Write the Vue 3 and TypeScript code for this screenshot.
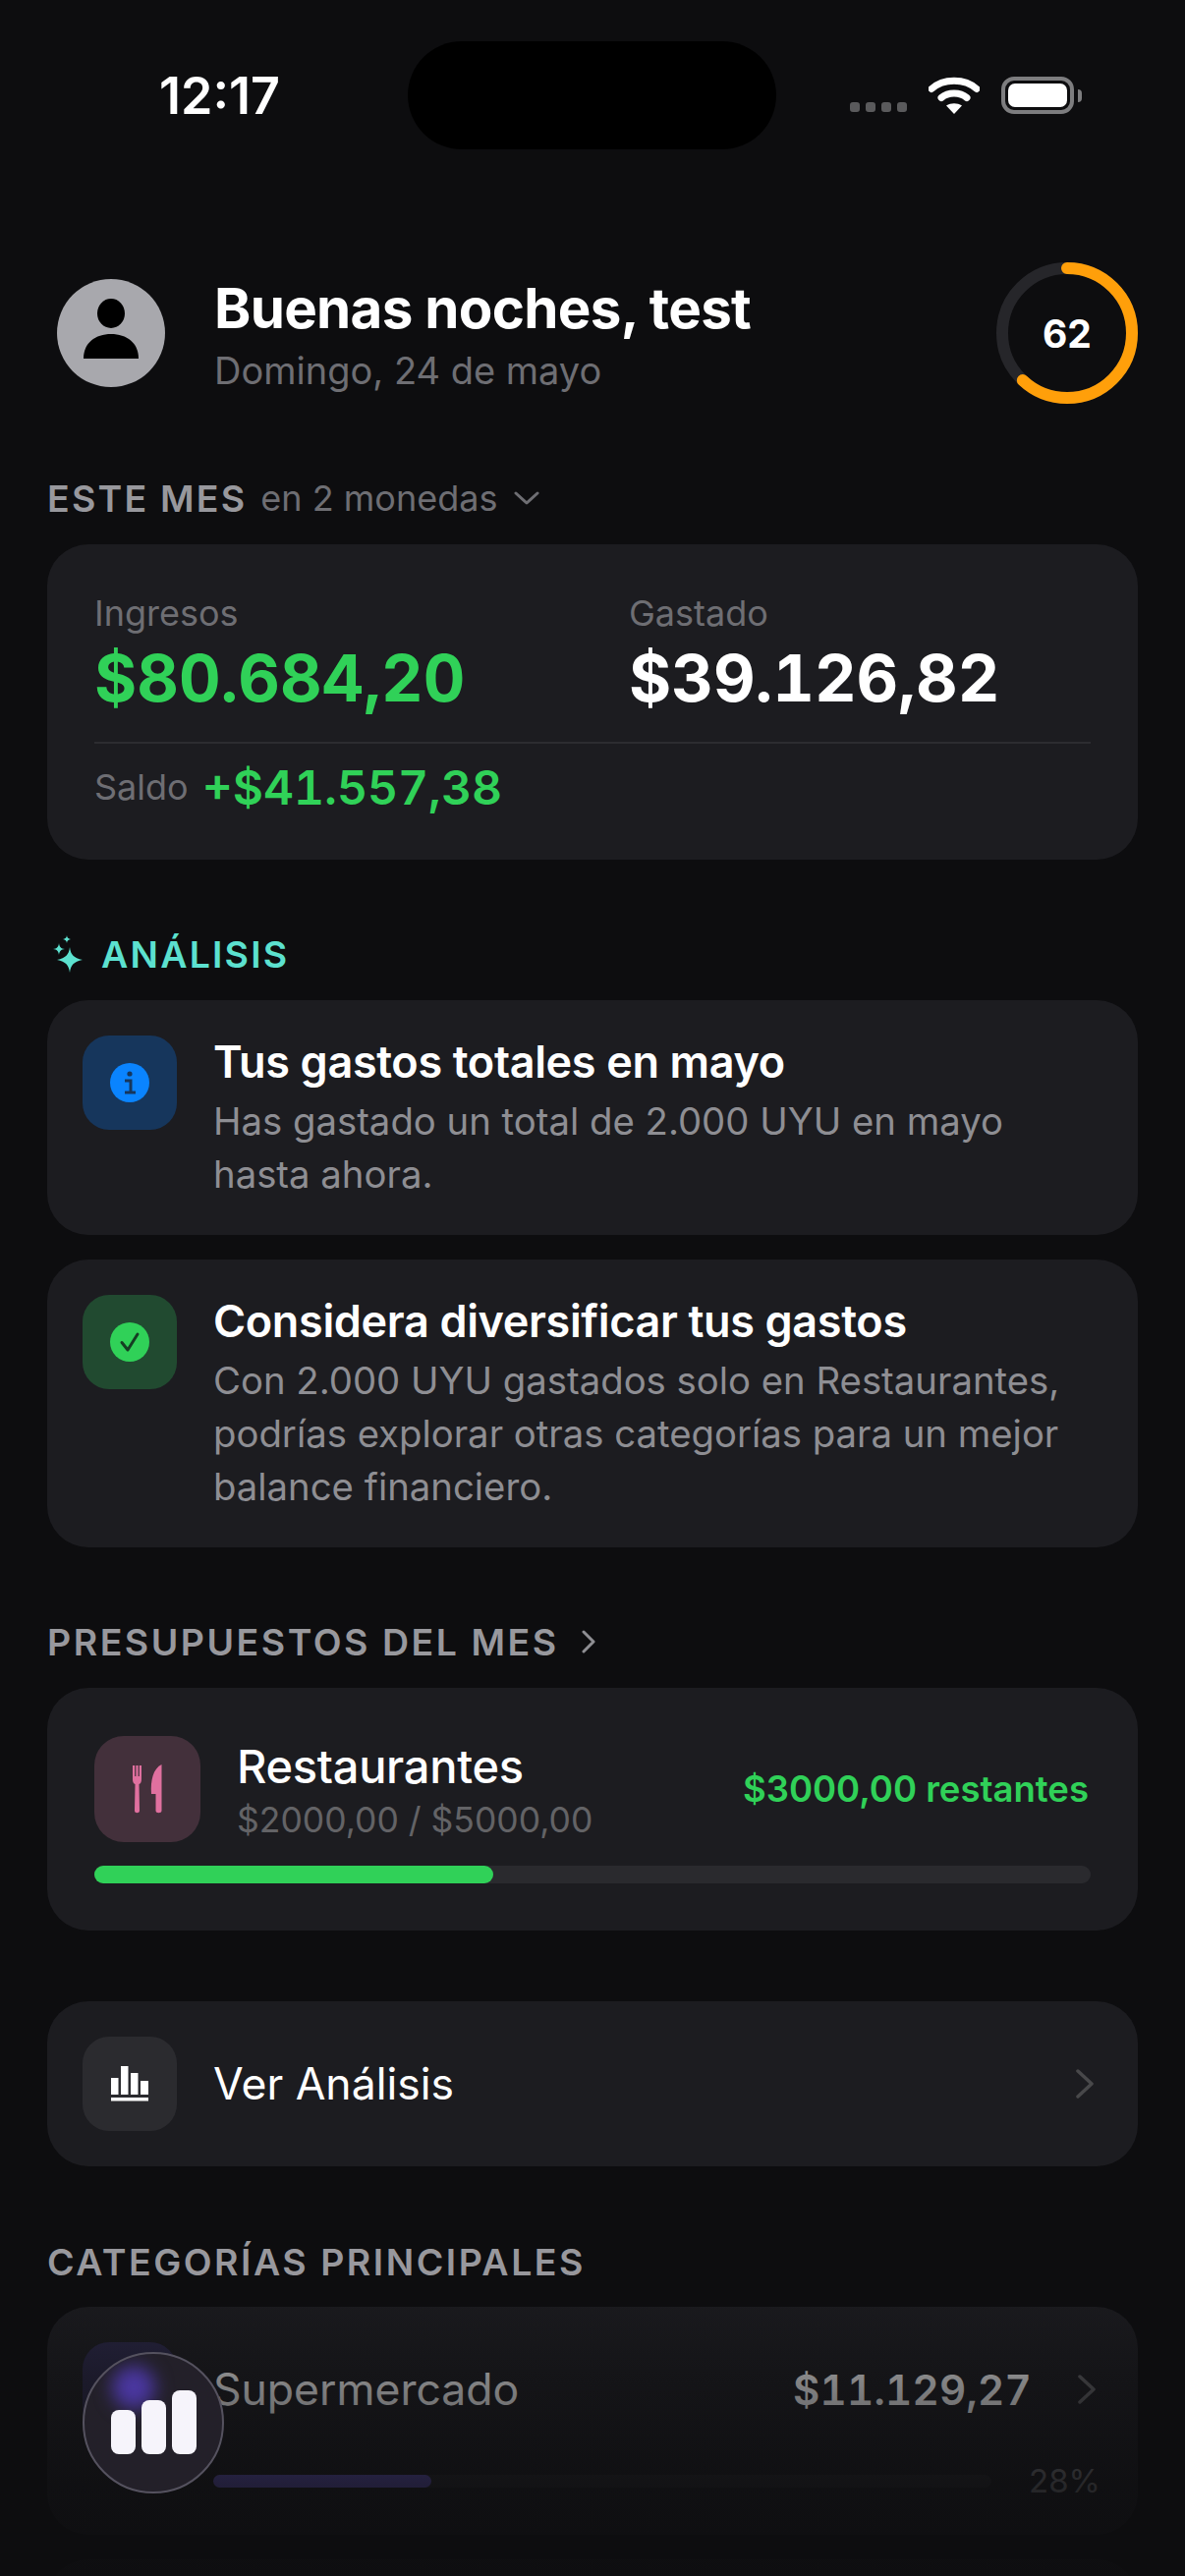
<script setup lang="ts">
interface Insight {
  kind: 'info' | 'ok'
  title: string
  body: string
}

const insights: Insight[] = [
  {
    kind: 'info',
    title: 'Tus gastos totales en mayo',
    body: 'Has gastado un total de 2.000 UYU en mayo hasta ahora.',
  },
  {
    kind: 'ok',
    title: 'Considera diversificar tus gastos',
    body: 'Con 2.000 UYU gastados solo en Restaurantes, podrías explorar otras categorías para un mejor balance financiero.',
  },
]

const score = 62
const budgetPct = 40
const categoryPct = 28
</script>

<template>
  <div class="screen">
    <header class="status">
      <span class="time">12:17</span>
      <div class="island"></div>
      <div class="status-icons">
        <div class="dots"><i></i><i></i><i></i><i></i></div>
        <svg class="wifi" width="52" height="38" viewBox="0 0 52 38">
          <path d="M3 12.5C15 1.5 37 1.5 49 12.5" fill="none" stroke="#fff" stroke-width="7" stroke-linecap="round" />
          <path d="M13 21.5C20 15.5 32 15.5 39 21.5" fill="none" stroke="#fff" stroke-width="7" stroke-linecap="round" />
          <path d="M26 38L18 29.5C23 26.5 29 26.5 34 29.5Z" fill="#fff" />
        </svg>
        <div class="battery"><div class="battery-fill"></div></div>
        <div class="battery-cap"></div>
      </div>
    </header>

    <main class="content">
      <section class="greeting">
        <div class="avatar">
          <svg width="60" height="64" viewBox="0 0 60 64">
            <ellipse cx="30" cy="15" rx="14" ry="15" fill="#000" />
            <path d="M2 61C2 45 14 36 30 36S58 45 58 61Z" fill="#000" />
          </svg>
        </div>
        <div class="greeting-text">
          <h1>Buenas noches, test</h1>
          <p>Domingo, 24 de mayo</p>
        </div>
        <div class="ring">
          <svg width="144" height="144" viewBox="0 0 144 144">
            <circle cx="72" cy="72" r="66" fill="none" stroke="#26262a" stroke-width="12" />
            <circle
              cx="72"
              cy="72"
              r="66"
              fill="none"
              stroke="#ff9f0a"
              stroke-width="12"
              stroke-linecap="round"
              pathLength="100"
              :stroke-dasharray="`${score} 100`"
              transform="rotate(-90 72 72)"
            />
          </svg>
          <span>{{ score }}</span>
        </div>
      </section>

      <div class="label month-label">
        <span>ESTE MES</span>
        <em>en 2 monedas</em>
        <svg width="26" height="16" viewBox="0 0 26 16">
          <path d="M2 3L13 13L24 3" fill="none" stroke="#6e6e73" stroke-width="3" stroke-linecap="round" stroke-linejoin="round" />
        </svg>
      </div>
      <section class="card summary">
        <div class="summary-cols">
          <div>
            <p class="muted">Ingresos</p>
            <p class="big green">$80.684,20</p>
          </div>
          <div>
            <p class="muted">Gastado</p>
            <p class="big">$39.126,82</p>
          </div>
        </div>
        <div class="balance">
          <span class="muted">Saldo</span>
          <strong>+$41.557,38</strong>
        </div>
      </section>

      <div class="label ai-label">
        <svg width="34" height="38" viewBox="0 0 34 38">
          <path d="M19 12C20 20 23 23 32 25C23 27 20 30 19 38C18 30 15 27 6 25C15 23 18 20 19 12Z" fill="#5ce1cf" />
          <path d="M8 8C8.5 12 10 13.500 14 14C10 14.500 8.500 16 8 20C7.500 16 6 14.500 2 14C6 13.500 7.500 12 8 8Z" fill="#5ce1cf" />
          <path d="M16 0C16.300 2.500 17.500 3.700 20 4C17.500 4.300 16.300 5.500 16 8C15.700 5.500 14.500 4.300 12 4C14.500 3.700 15.700 2.500 16 0Z" fill="#5ce1cf" />
        </svg>
        <span>ANÁLISIS</span>
      </div>
      <div class="insights">
        <article v-for="item in insights" :key="item.title" class="card insight">
          <div class="tile" :class="item.kind">
            <div class="badge">
              <svg v-if="item.kind === 'info'" width="40" height="40" viewBox="0 0 40 40">
                <circle cx="20" cy="11" r="2.600" fill="#16365c" />
                <path d="M15 18H21V29M15 30H26" fill="none" stroke="#16365c" stroke-width="3" />
              </svg>
              <svg v-else width="40" height="40" viewBox="0 0 40 40">
                <path d="M12 20.500L18 28L28 12" fill="none" stroke="#153d23" stroke-width="3" stroke-linecap="round" stroke-linejoin="round" />
              </svg>
            </div>
          </div>
          <div class="insight-text">
            <h3>{{ item.title }}</h3>
            <p>{{ item.body }}</p>
          </div>
        </article>
      </div>

      <div class="label budget-label">
        <span>PRESUPUESTOS DEL MES</span>
        <svg width="16" height="24" viewBox="0 0 16 24">
          <path d="M3 2L13 12L3 22" fill="none" stroke="#8e8e93" stroke-width="3" stroke-linecap="round" stroke-linejoin="round" />
        </svg>
      </div>
      <section class="card budget">
        <div class="budget-row">
          <div class="tile food">
            <svg width="30" height="50" viewBox="0 0 30 50">
              <path d="M0 1H2.200V12H3.400V1H5.600V12H6.800V1H9V15C9 18 8 19.500 6.500 20L7 47C7 50 2 50 2 47L2.500 20C1 19.500 0 18 0 15Z" fill="#e0709f" />
              <path d="M29.500 0V47C29.500 50 23.500 50 23.500 47V30H19C18 16 21 4 29.500 0Z" fill="#e0709f" />
            </svg>
          </div>
          <div class="budget-text">
            <h3>Restaurantes</h3>
            <p>$2000,00 / $5000,00</p>
          </div>
          <span class="remaining">$3000,00 restantes</span>
        </div>
        <div class="track">
          <div class="fill" :style="{ width: `${budgetPct}%` }"></div>
        </div>
      </section>

      <section class="card link">
        <div class="tile plain">
          <svg width="38" height="36" viewBox="0 0 38 36">
            <path d="M0 12H7.500V29H0ZM10 0H17.500V29H10ZM20 7H27.500V29H20ZM30 15H38V29H30Z" fill="#fff" />
            <rect y="32" width="38" height="3.500" fill="#fff" />
          </svg>
        </div>
        <span>Ver Análisis</span>
        <svg class="chev" width="20" height="30" viewBox="0 0 20 30">
          <path d="M3 2L17 15L3 28" fill="none" stroke="#48484a" stroke-width="3.500" stroke-linecap="round" stroke-linejoin="round" />
        </svg>
      </section>

      <div class="label cat-label"><span>CATEGORÍAS PRINCIPALES</span></div>
      <section class="card category">
        <div class="tile cat"></div>
        <div class="category-body">
          <div class="category-top">
            <span class="cat-name">Supermercado</span>
            <span class="cat-amount">$11.129,27</span>
            <svg width="20" height="30" viewBox="0 0 20 30">
              <path d="M3 2L17 15L3 28" fill="none" stroke="#636366" stroke-width="3.500" stroke-linecap="round" stroke-linejoin="round" />
            </svg>
          </div>
          <div class="category-bottom">
            <div class="cat-track">
              <div class="cat-fill" :style="{ width: `${categoryPct}%` }"></div>
            </div>
            <span class="cat-pct">{{ categoryPct }}%</span>
          </div>
        </div>
      </section>
      <section class="card category"></section>
    </main>

    <div class="fade"></div>

    <button type="button" class="fab">
      <i class="glow"></i>
      <i class="bar b1"></i>
      <i class="bar b2"></i>
      <i class="bar b3"></i>
    </button>
  </div>
</template>

<style>
html,
body {
  margin: 0;
  background: #0d0d0f;
}
</style>

<style scoped>
.screen {
  position: relative;
  width: 1206px;
  height: 2622px;
  overflow: hidden;
  background: #0d0d0f;
  color: #fff;
  font-family: Inter, "Liberation Sans", sans-serif;
}

h1,
h3,
p {
  margin: 0;
}

.status {
  display: grid;
  grid-template-columns: 415px 375px 1fr;
  align-items: center;
  height: 110px;
  padding-top: 42px;
}

.time {
  padding-left: 162px;
  font-size: 52px;
  font-weight: 600;
}

.island {
  height: 110px;
  border-radius: 55px;
  background: #000;
}

.status-icons {
  display: flex;
  align-items: center;
  padding-left: 75px;
}

.dots {
  display: flex;
  gap: 6px;
  margin-top: 24px;
}

.dots i {
  width: 10px;
  height: 10px;
  border-radius: 3px;
  background: #5a5a5c;
}

.wifi {
  margin-left: 22px;
}

.battery {
  box-sizing: border-box;
  width: 74px;
  height: 38px;
  margin-left: 22px;
  padding: 3px;
  border: 4px solid #7d7d7f;
  border-radius: 13px;
}

.battery-fill {
  height: 100%;
  border-radius: 7px;
  background: #fff;
}

.battery-cap {
  width: 4px;
  height: 13px;
  margin-left: 4px;
  border-radius: 0 4px 4px 0;
  background: #7d7d7f;
}

.content {
  padding: 115px 48px 0;
}

.greeting {
  display: flex;
  align-items: center;
  height: 144px;
}

.avatar {
  display: flex;
  align-items: flex-end;
  justify-content: center;
  box-sizing: border-box;
  width: 110px;
  height: 110px;
  margin-left: 10px;
  padding-bottom: 26px;
  border-radius: 50%;
  background: #a8a8ad;
}

.greeting-text {
  flex: 1;
  margin-left: 50px;
  margin-top: 3px;
}

.greeting-text h1 {
  font-size: 56.5px;
  line-height: 66px;
  font-weight: 700;
  letter-spacing: -0.7px;
}

.greeting-text p {
  margin-top: 7px;
  font-size: 38px;
  line-height: 46px;
  color: #6e6e73;
}

.ring {
  position: relative;
  width: 144px;
  height: 144px;
}

.ring svg {
  display: block;
}

.ring span {
  position: absolute;
  inset: 0;
  display: flex;
  align-items: center;
  justify-content: center;
  font-size: 39px;
  font-weight: 700;
}

.label {
  display: flex;
  align-items: center;
  height: 44px;
  font-size: 37.5px;
  font-weight: 600;
  letter-spacing: 2.5px;
  color: #98989d;
}

.month-label {
  margin-top: 74px;
  letter-spacing: 2.2px;
}

.month-label em {
  margin-left: 14px;
  font-size: 36px;
  font-style: normal;
  font-weight: 400;
  letter-spacing: 0;
  color: #6e6e73;
}

.month-label svg {
  margin-left: 17px;
}

.card {
  border-radius: 42px;
  background: #1c1c20;
}

.summary {
  box-sizing: border-box;
  height: 321px;
  margin-top: 25px;
  padding: 47px 48px 0;
}

.summary-cols {
  display: grid;
  grid-template-columns: 544px 1fr;
  padding-bottom: 25px;
  border-bottom: 2px solid #2c2c30;
}

.muted {
  font-size: 36px;
  line-height: 46px;
  color: #6e6e73;
}

.big {
  margin-top: 3px;
  font-size: 66px;
  line-height: 80px;
  font-weight: 700;
  font-variant-numeric: tabular-nums;
}

.green {
  color: #30d158;
}

.balance {
  display: flex;
  align-items: center;
  gap: 14px;
  height: 88px;
}

.balance strong {
  font-size: 48px;
  font-weight: 600;
  color: #30d158;
  font-variant-numeric: tabular-nums;
}

.ai-label {
  margin-top: 74px;
  color: #5ce1cf;
  letter-spacing: 2.2px;
}

.ai-label svg {
  margin-left: 4px;
  margin-right: 17px;
}

.insights {
  display: flex;
  flex-direction: column;
  gap: 25px;
  margin-top: 25px;
}

.insight {
  display: flex;
  gap: 38px;
  padding: 36px 36px 35px;
}

.tile {
  display: flex;
  flex: none;
  align-items: center;
  justify-content: center;
  width: 96px;
  height: 96px;
  border-radius: 27px;
}

.tile.info {
  background: #16365c;
}

.tile.ok {
  background: #214a30;
}

.badge {
  display: flex;
  width: 40px;
  height: 40px;
  border-radius: 50%;
}

.info .badge {
  background: #0a84ff;
}

.ok .badge {
  background: #30d158;
}

.insight-text {
  margin-top: 2px;
  margin-left: -1px;
}

.insight-text h3 {
  font-size: 45px;
  line-height: 50px;
  font-weight: 600;
  letter-spacing: -0.35px;
}

.insight-text p {
  margin-top: 8px;
  font-size: 38.3px;
  line-height: 54px;
  color: #8e8e93;
}

.budget-label {
  gap: 22px;
  margin-top: 74px;
}

.budget {
  margin-top: 25px;
  padding: 49px 48px 48px;
}

.budget-row {
  display: flex;
  align-items: center;
}

.tile.food {
  width: 108px;
  height: 108px;
  border-radius: 30px;
  background: #43303b;
}

.budget-text {
  flex: 1;
  margin-left: 37px;
}

.budget-text h3 {
  font-size: 47px;
  line-height: 56px;
  font-weight: 500;
  letter-spacing: -0.3px;
}

.budget-text p {
  margin-top: 5px;
  margin-bottom: -3px;
  font-size: 35.5px;
  line-height: 44px;
  color: #636366;
}

.remaining {
  margin-right: 2px;
  font-size: 36.5px;
  font-weight: 600;
  color: #30d158;
}

.track {
  height: 18px;
  margin-top: 24px;
  border-radius: 9px;
  background: #2a2a2e;
}

.fill {
  height: 100%;
  border-radius: 9px;
  background: #30d158;
}

.link {
  display: flex;
  align-items: center;
  box-sizing: border-box;
  height: 168px;
  margin-top: 72px;
  padding: 0 44px 0 36px;
}

.tile.plain {
  background: #2b2b2f;
}

.link span {
  flex: 1;
  margin-left: 37px;
  font-size: 44.5px;
  font-weight: 400;
}

.cat-label {
  margin-top: 75px;
}

.category {
  display: flex;
  box-sizing: border-box;
  height: 232px;
  margin-top: 24px;
  padding: 36px 42px 0 36px;
}

.category + .category {
  margin-top: 25px;
}

.tile.cat {
  background: #2a2746;
}

.category-body {
  flex: 1;
  margin-left: 37px;
}

.category-top {
  display: flex;
  align-items: center;
  height: 96px;
}

.cat-name {
  flex: 1;
  font-size: 44.5px;
  font-weight: 400;
}

.cat-amount {
  margin-right: 46px;
  font-size: 42px;
  font-weight: 600;
  letter-spacing: 0.3px;
  font-variant-numeric: tabular-nums;
}

.category-bottom {
  display: flex;
  align-items: center;
  justify-content: space-between;
  margin-top: 25px;
  margin-right: -4px;
}

.cat-track {
  width: 792px;
  height: 13px;
  border-radius: 7px;
  background: #2a2a2e;
}

.cat-fill {
  height: 100%;
  border-radius: 7px;
  background: #7463e0;
}

.cat-pct {
  font-size: 33px;
  color: #8e8e93;
}

.fade {
  position: absolute;
  right: 0;
  bottom: 0;
  left: 0;
  height: 310px;
  background: linear-gradient(to bottom, rgba(13, 13, 15, 0) 0%, rgba(13, 13, 15, 0.5) 35%, rgba(13, 13, 15, 0.8) 70%, rgba(13, 13, 15, 0.92) 100%);
}

.fab {
  position: absolute;
  top: 2394px;
  left: 84px;
  box-sizing: border-box;
  width: 144px;
  height: 144px;
  padding: 0;
  overflow: hidden;
  border: 2px solid #55525f;
  border-radius: 50%;
  background: #232029;
}

.fab i {
  position: absolute;
}

.glow {
  top: 12px;
  left: 28px;
  width: 44px;
  height: 44px;
  border-radius: 50%;
  background: #4a37a0;
  filter: blur(9px);
}

.bar {
  bottom: 38px;
  width: 25px;
  border-radius: 8px;
  background: #f6f4fb;
}

.b1 {
  left: 27px;
  height: 45px;
}

.b2 {
  left: 58px;
  height: 55px;
}

.b3 {
  left: 89px;
  height: 65px;
}

.tile svg {
  display: block;
}
</style>
